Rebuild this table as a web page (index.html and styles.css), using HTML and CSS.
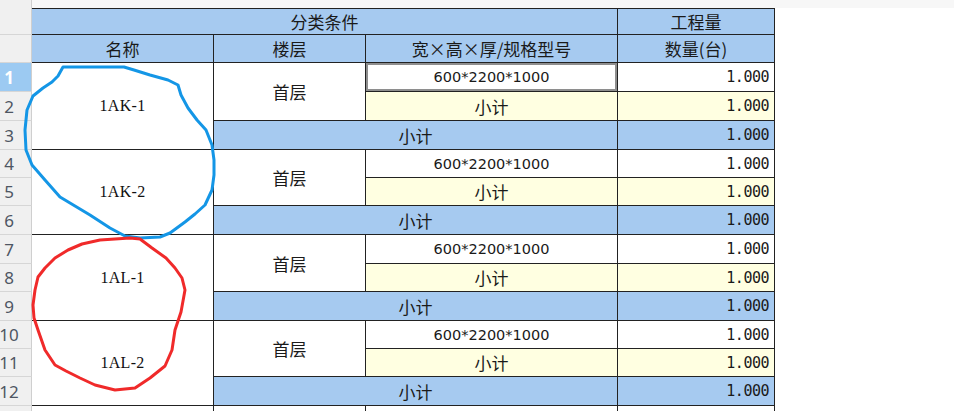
FILE: index.html
```html
<!DOCTYPE html>
<html lang="zh-CN">
<head>
<meta charset="utf-8">
<title>工程量表</title>
<link rel="stylesheet" href="styles.css">
</head>
<body>
<div class="page">
  <div class="rownums">
    <div class="rn h1"></div>
    <div class="rn h2"></div>
    <div class="rn t29 sel">1</div>
    <div class="rn t29">2</div>
    <div class="rn t29">3</div>
    <div class="rn t28">4</div>
    <div class="rn t28">5</div>
    <div class="rn t29">6</div>
    <div class="rn t29">7</div>
    <div class="rn t28">8</div>
    <div class="rn t29">9</div>
    <div class="rn t28">10</div>
    <div class="rn t28">11</div>
    <div class="rn t29">12</div>
    <div class="rn t29"></div>
  </div>
  <div class="main">
    <div class="strip"></div>
    <div class="sheet">
      <div class="c hd span3 cjk">分类条件</div>
      <div class="c hd cjk">工程量</div>
      <div class="c hd cjk">名称</div>
      <div class="c hd cjk">楼层</div>
      <div class="c hd cjk">宽×高×厚/规格型号</div>
      <div class="c hd cjk">数量(台)</div>

      <div class="c name rows3">1AK-1</div>
      <div class="c floor rows2 cjk">首层</div>
      <div class="c spec active">600*2200*1000</div>
      <div class="c num">1.000</div>
      <div class="c sub cjk">小计</div>
      <div class="c num sub">1.000</div>
      <div class="c tot span2 cjk">小计</div>
      <div class="c num tot">1.000</div>

      <div class="c name rows3">1AK-2</div>
      <div class="c floor rows2 cjk">首层</div>
      <div class="c spec">600*2200*1000</div>
      <div class="c num">1.000</div>
      <div class="c sub cjk">小计</div>
      <div class="c num sub">1.000</div>
      <div class="c tot span2 cjk">小计</div>
      <div class="c num tot">1.000</div>

      <div class="c name rows3">1AL-1</div>
      <div class="c floor rows2 cjk">首层</div>
      <div class="c spec">600*2200*1000</div>
      <div class="c num">1.000</div>
      <div class="c sub cjk">小计</div>
      <div class="c num sub">1.000</div>
      <div class="c tot span2 cjk">小计</div>
      <div class="c num tot">1.000</div>

      <div class="c name rows3">1AL-2</div>
      <div class="c floor rows2 cjk">首层</div>
      <div class="c spec">600*2200*1000</div>
      <div class="c num">1.000</div>
      <div class="c sub cjk">小计</div>
      <div class="c num sub">1.000</div>
      <div class="c tot span2 cjk">小计</div>
      <div class="c num tot">1.000</div>

      <div class="c"></div>
      <div class="c"></div>
      <div class="c"></div>
      <div class="c"></div>
    </div>
  </div>
  <svg class="marks" width="954" height="411" viewBox="0 0 954 411">
    <path class="blue" d="M63 67 L124 67 L134 70 L150 75 L168 80 L178 85 L181 95 L188 108 L197 120 L206 130 L212 145 L214 160 L214 175 L212 190 L205 205 L195 214 L185 222 L170 233 L160 237 L140 238 L125 236 L110 228 L90 215 L70 203 L60 197 L45 180 L32 165 L26 150 L25 130 L27 110 L33 96 L43 88 L52 82 L58 76 Z"/>
    <path class="red" d="M130 238 L115 239 L100 240 L82 244 L68 250 L55 258 L45 268 L38 277 L35 290 L33 305 L34 318 L38 330 L45 350 L55 365 L66 371 L80 378 L95 385 L115 390 L135 388 L150 378 L165 366 L172 350 L175 330 L181 312 L185 290 L182 278 L175 268 L166 258 L152 248 L140 239 Z"/>
  </svg>
</div>
</body>
</html>
```

FILE: styles.css
```css
html, body {
  margin: 0;
  padding: 0;
  background: #ffffff;
}
body {
  overflow: hidden;
  width: 954px;
  height: 411px;
}
.page {
  position: relative;
  display: flex;
  align-items: flex-start;
  width: 954px;
  height: 411px;
  overflow: hidden;
}
.rownums {
  display: flex;
  flex-direction: column;
  width: 32px;
  flex: none;
}
.rn {
  box-sizing: border-box;
  flex: none;
  width: 32px;
  background: #f0f0f0;
  border-right: 1px solid #cfcfcf;
  border-bottom: 1px solid #d6d6d6;
  padding-right: 13px;
  text-align: center;
  font-family: "Noto Sans", "Open Sans", sans-serif;
  font-size: 17px;
  color: #4e5663;
  display: flex;
  align-items: center;
  justify-content: center;
  overflow: visible;
  white-space: nowrap;
}
.rn.h1 { height: 35px; }
.rn.h2 { height: 28px; }
.rn.t29 { height: 29px; }
.rn.t28 { height: 28px; }
.rn.sel {
  background: #9ccaf2;
  color: #ffffff;
  font-weight: bold;
}
.main {
  flex: 1;
  display: flex;
  flex-direction: column;
}
.strip {
  flex: none;
  height: 8px;
  background: #f7f7f7;
}
.sheet {
  flex: none;
  display: grid;
  width: 743px;
  grid-template-columns: 182px 152px 252px 157px;
  grid-template-rows: 26px 28px 29px 29px 29px 28px 28px 29px 29px 28px 29px 28px 28px 29px 30px;
  border-top: 1px solid #222222;
}
.c {
  box-sizing: border-box;
  border-right: 1px solid #222222;
  border-bottom: 1px solid #222222;
  background: #ffffff;
  display: flex;
  align-items: center;
  justify-content: center;
  color: #111111;
  white-space: nowrap;
  overflow: hidden;
}
.cjk {
  font-family: "Noto Sans CJK SC", "Noto Sans", sans-serif;
  font-size: 17px;
  color: #1a1a1a;
}
.hd { background: #a6caf0; }
.span3 { grid-column: span 3; }
.span2 { grid-column: span 2; }
.rows3 { grid-row: span 3; }
.rows2 { grid-row: span 2; }
.name {
  font-family: "Liberation Serif", "DejaVu Serif", serif;
  font-size: 16px;
  letter-spacing: 0.3px;
}
.spec {
  font-family: "DejaVu Sans", sans-serif;
  font-size: 14.5px;
  color: #1a1a1a;
}
.spec.active {
  box-shadow: inset 0 0 0 2px #8e8e8e;
}
.num {
  justify-content: flex-end;
  padding-right: 5px;
  font-family: "DejaVu Sans Mono", "Liberation Mono", monospace;
  font-size: 15px;
  letter-spacing: -0.5px;
  color: #1a1a1a;
}
.sub { background: #ffffe1; }
.tot { background: #a6caf0; }
.marks {
  position: absolute;
  left: 0;
  top: 0;
  pointer-events: none;
}
.marks path {
  fill: none;
  stroke-width: 3;
  stroke-linejoin: round;
  stroke-linecap: round;
}
.marks .blue { stroke: #1496e6; }
.marks .red { stroke: #f02a2a; }
```
